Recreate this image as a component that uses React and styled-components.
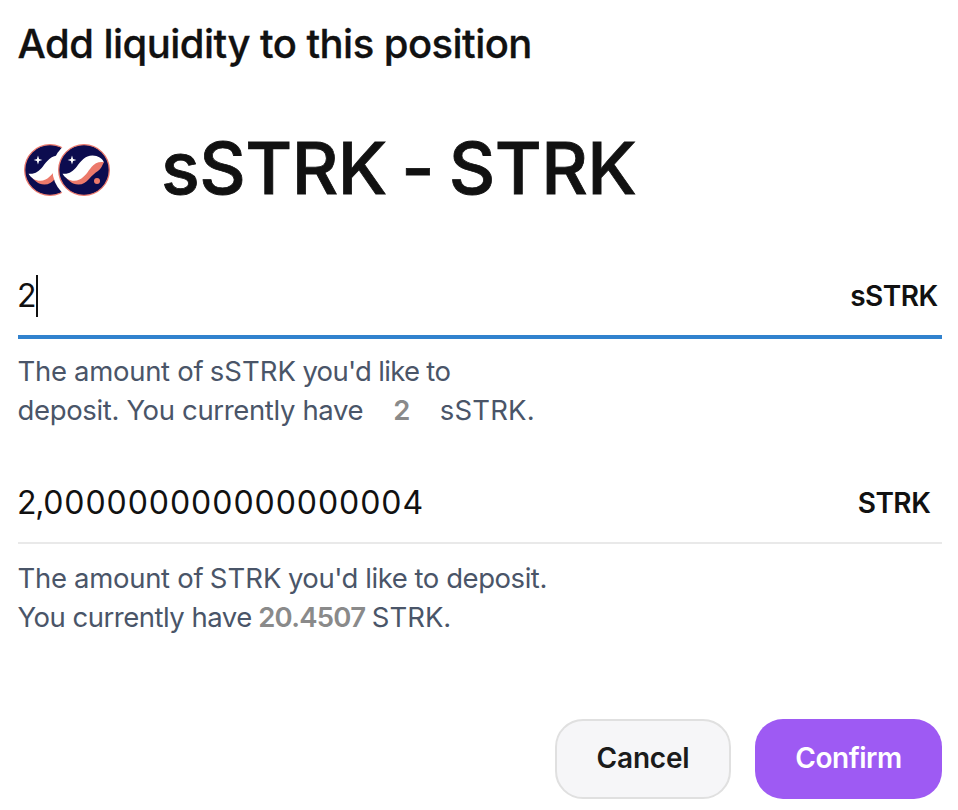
import React from "react";
import styled, { createGlobalStyle } from "styled-components";

const GlobalStyle = createGlobalStyle`
  * { box-sizing: border-box; }
  body {
    margin: 0;
    background: #fff;
    color: #111;
    font-family: Inter, "Liberation Sans", sans-serif;
  }
`;

const Dialog = styled.main`
  display: flex;
  flex-direction: column;
  height: 810px;
  padding: 14px 16px 0 18px;
`;

const Title = styled.h1`
  margin: 0 0 0 -0.5px;
  font-size: 40px;
  line-height: 60px;
  font-weight: 500;
  letter-spacing: -0.54px;
  -webkit-text-stroke: 0.3px #111;
`;

const PairHeader = styled.section`
  display: flex;
  align-items: center;
  gap: 46px;
  height: 100px;
  margin-top: 44px;
`;

const PairLogo = styled.svg`
  width: 100px;
  height: 56px;
  margin-top: 3px;
  display: block;
`;

const PairName = styled.h2`
  margin: 0 0 0 -3px;
  font-size: 72px;
  line-height: 100px;
  font-weight: 500;
  letter-spacing: -0.55px;
  word-spacing: -4px;
  -webkit-text-stroke: 0.8px #111;
`;

const Field = styled.section`
  display: flex;
  flex-direction: column;
  margin-top: ${(p) => p.$gap}px;
`;

const FieldRow = styled.div`
  display: flex;
  align-items: center;
  height: ${(p) => (p.$active ? 84 : 82)}px;
  padding-top: 2px;
  border-bottom: ${(p) => (p.$active ? "4px solid #3182ce" : "2px solid #e9e9e9")};
`;

const Amount = styled.div`
  display: flex;
  align-items: center;
  flex: 1;
  margin-left: -1px;
  font-size: 32px;
  line-height: 42px;
  letter-spacing: 0.95px;
`;

const Whole = styled.span`
  letter-spacing: -1.3px;
`;

const Caret = styled.span`
  width: 2px;
  height: 42px;
  margin-left: 1px;
  background: #111;
`;

const Unit = styled.span`
  width: 96px;
  text-align: center;
  font-size: 28px;
  line-height: 42px;
  font-weight: 600;
  letter-spacing: -0.5px;
`;

const Helper = styled.div`
  margin-top: ${(p) => p.$gap}px;
  margin-left: -0.5px;
  color: #4a5568;
  font-size: 27.5px;
  line-height: 39px;
`;

const Line = styled.div`
  display: flex;
  gap: 6.5px;
  white-space: nowrap;
`;

const Words = styled.span`
  letter-spacing: ${(p) => p.$track || 0}px;
`;

const Balance = styled.strong`
  margin: 0 ${(p) => p.$space || 0}px;
  color: #8a8a8a;
  font-weight: 600;
  letter-spacing: -0.75px;
`;

const Actions = styled.footer`
  display: flex;
  justify-content: flex-end;
  gap: 24px;
  margin-top: 82px;
`;

const Button = styled.button`
  width: ${(p) => (p.$primary ? 187 : 176)}px;
  height: 80px;
  padding: 0 0 2px;
  border: ${(p) => (p.$primary ? "0" : "2px solid #e0e0e0")};
  border-radius: 28px;
  background: ${(p) => (p.$primary ? "#9e5af3" : "#f6f6f8")};
  color: ${(p) => (p.$primary ? "#fff" : "#1b1b1b")};
  font: 600 28px/40px Inter, "Liberation Sans", sans-serif;
  letter-spacing: ${(p) => (p.$primary ? -0.5 : -0.2)}px;
`;

function Coin({ x }) {
  return (
    <g transform={`translate(${x} 28)`}>
      <circle r="25.3" fill="#0c0c4f" stroke="#ec796b" strokeWidth="1.3" />
      <path
        d="M-19 6.5 C-16 10 -12 14.5 -5.7 14.5 C-1 14.5 2 12.5 5 9 C8 5.5 11 3 14 1 C17 -1 18 -4 20 -8 L12 -9 L0 4 L-8 10Z"
        fill="#ec796b"
      />
      <path
        d="M-21.5 3.7 C-15 4.5 -11 1 -7.3 -3.3 C-3 -9 1 -14.5 8.5 -14.5 C14 -14.5 18.5 -11.5 19.8 -7.8 C14.5 -8.5 10.5 -6.5 7.5 -3 C4 1.2 1 7 -4.5 9.6 C-11 12.6 -18 9.5 -21.5 3.7Z"
        fill="#fff"
      />
      <path
        d="M-12 -14.5 L-10.9 -11.1 L-7.6 -10 L-10.9 -8.9 L-12 -5.5 L-13.1 -8.9 L-16.4 -10 L-13.1 -11.1Z"
        fill="#fff"
      />
      <circle cx="13" cy="11" r="3" fill="#ec796b" />
    </g>
  );
}

export default function App() {
  return (
    <>
      <GlobalStyle />
      <Dialog>
        <Title>Add liquidity to this position</Title>
        <PairHeader>
          <PairLogo viewBox="0 0 100 56" aria-label="sSTRK and STRK">
            <Coin x={32} />
            <circle cx="66" cy="28" r="31.5" fill="#fff" />
            <Coin x={66} />
          </PairLogo>
          <PairName>sSTRK - STRK</PairName>
        </PairHeader>

        <Field $gap={37}>
          <FieldRow $active>
            <Amount>
              <Whole>2</Whole>
              <Caret />
            </Amount>
            <Unit>sSTRK</Unit>
          </FieldRow>
          <Helper $gap={13}>
            <Line>
              <Words $track={-0.3}>The amount of</Words>
              <Words>sSTRK</Words>
              <Words $track={-0.7}>you'd like to</Words>
            </Line>
            <Line>
              <Words $track={-0.35}>deposit. You currently have</Words>
              <Balance $space={23.5}>2</Balance>
              <Words $track={0.2}>sSTRK.</Words>
            </Line>
          </Helper>
        </Field>

        <Field $gap={32}>
          <FieldRow>
            <Amount>
              <Whole>2,</Whole>000000000000000004
            </Amount>
            <Unit>STRK</Unit>
          </FieldRow>
          <Helper $gap={15}>
            <Line>
              <Words $track={-0.3}>The amount of</Words>
              <Words>STRK</Words>
              <Words $track={-0.45}>you'd like to deposit.</Words>
            </Line>
            <Line>
              <Words $track={-0.5}>You currently have</Words>
              <Balance>20.4507</Balance>
              <Words>STRK.</Words>
            </Line>
          </Helper>
        </Field>

        <Actions>
          <Button>Cancel</Button>
          <Button $primary>Confirm</Button>
        </Actions>
      </Dialog>
    </>
  );
}
